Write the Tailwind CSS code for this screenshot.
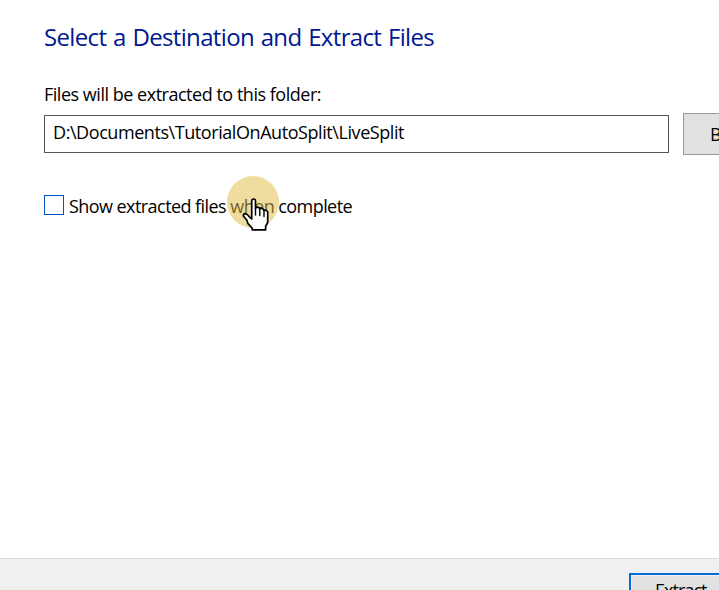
<!DOCTYPE html>
<html lang="en">
<head>
<meta charset="utf-8">
<title>Extract Compressed Folders</title>
<script src="https://cdn.jsdelivr.net/npm/@tailwindcss/browser@4"></script>
</head>
<body class="h-[590px] w-[719px] overflow-hidden bg-white font-['Open_Sans','Noto_Sans',sans-serif] text-[18px] text-black">
<div class="flex h-[590px] w-[719px] flex-col overflow-hidden">
  <main class="h-[558px] shrink-0 pl-[44px] pt-[21px]">
    <h1 class="h-8 whitespace-nowrap text-[24px] leading-8 text-[#00188f]"><span class="tracking-[-0.65px] [word-spacing:1.1px]">Select a Destination and Extract Files</span></h1>
    <p class="mt-[29px] h-6 whitespace-nowrap leading-6"><span class="tracking-[-0.48px]">Files will be extracted to this folder:</span></p>
    <div class="mt-[7px] flex w-[900px] items-center gap-[14px]">
      <div class="flex h-[38px] w-[625px] items-center border border-[#555] pb-[4px] pl-[8px] leading-6"><span class="tracking-[-0.43px]">D:\Documents\TutorialOnAutoSplit\LiveSplit</span></div>
      <button class="h-[42px] w-[140px] border border-[#999] bg-[#e1e1e1] pl-[26px] text-left leading-6">Browse...</button>
    </div>
    <div class="relative mt-[39px] flex h-6 items-center gap-[5px]">
      <span class="relative -top-[1px] size-5 border border-[#0055c4] bg-white"></span>
      <label class="whitespace-nowrap leading-6"><span class="tracking-[-0.56px]">Show extracted files when complete</span></label>
      <span class="absolute left-[183px] -top-[18px] size-[52px] rounded-full bg-[#dfbb3f]/50"></span>
      <svg class="absolute left-[197px] top-[4px]" width="30" height="34" viewBox="0 0 30 34" fill="white" stroke="black" stroke-width="1.7" stroke-linejoin="round" stroke-linecap="round">
        <path d="M10.7 17.8V3.2Q10.7 1 12.6 1T14.5 3.2V10.5Q14.8 9.2 16.4 9.2T18.8 11Q19.2 10 20.7 10.3T23 12.4Q25.9 11.6 26.7 14.1V24.5L24.6 28.5V31.9H11.2V30.2L7 25.7L5.8 22L2.5 18.2Q1.8 15.8 4.4 15.7Q6.4 16 7.6 18.1L10.7 21Z"/>
        <path d="M14.5 10.5V17M18.8 11.5V17.5M23 12.8V18.5" fill="none" stroke-width="1.4"/>
      </svg>
    </div>
  </main>
  <footer class="flex h-[60px] shrink-0 border-t border-[#d9d9d9] bg-[#f0f0f0] pl-[629px] pt-[14px]">
    <button class="flex h-[42px] w-[140px] shrink-0 border-2 border-[#006bd6] bg-[#e1e1e1] pl-[24px] pt-[3px] text-left leading-6 inset-ring inset-ring-[#f0f0f0]"><span class="tracking-[-0.95px]">Extract</span></button>
  </footer>
</div>
</body>
</html>
